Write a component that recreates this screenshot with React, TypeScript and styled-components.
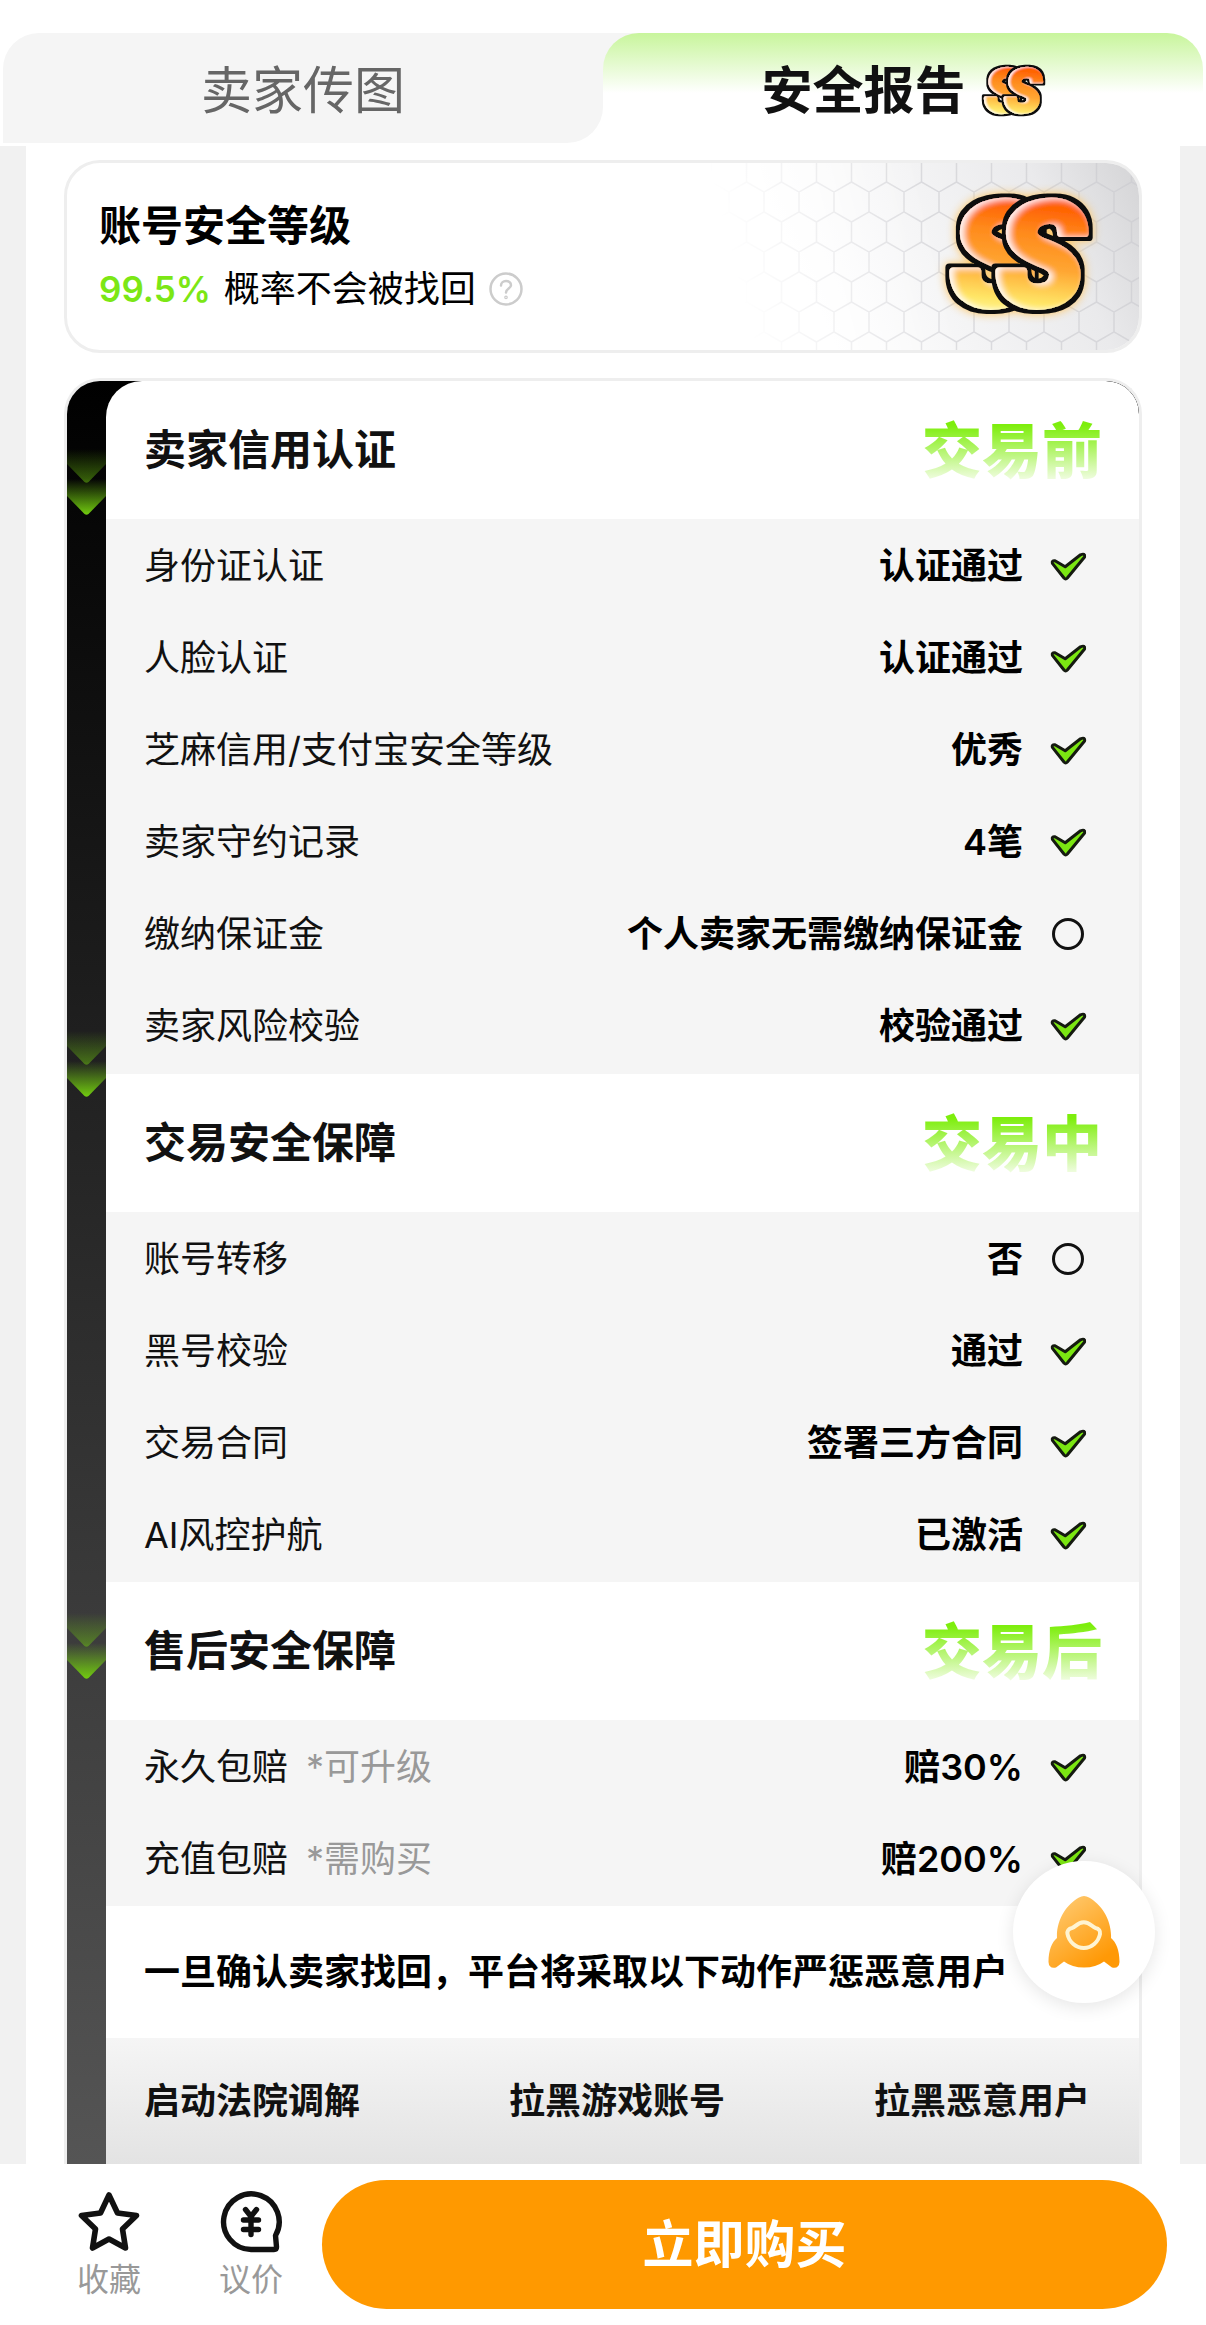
import React, { useId, useState } from "react";
import styled, { createGlobalStyle, css } from "styled-components";

const GlobalStyle = createGlobalStyle`
  *, *::before, *::after { box-sizing: border-box; }
  body {
    margin: 0;
    background: #fff;
    color: #111;
    font-family: Inter, "Noto Sans CJK SC", sans-serif;
    font-size: 36px;
    line-height: 48px;
  }
  h1, h2, p, dl, dd, ul { margin: 0; padding: 0; }
  ul { list-style: none; }
  button { font: inherit; color: inherit; border: 0; padding: 0; background: none; cursor: pointer; }
  svg { display: block; flex: none; }
`;

const Page = styled.div`
  min-height: 100vh;
  display: flex;
  flex-direction: column;
`;

const Tabs = styled.div`
  display: grid;
  grid-template-columns: 1fr 1fr;
  padding: 33px 3px 3px;
`;

const TabSlot = styled.div<{ $active: boolean }>`
  height: 110px;
  ${(p) => p.$active && css`background: linear-gradient(90deg, #f5f5f5 50%, #fff 50%);`}
`;

const Tab = styled.button<{ $active: boolean }>`
  width: 100%;
  height: 100%;
  display: flex;
  align-items: center;
  justify-content: center;
  gap: 16px;
  padding-top: 5px;
  font-size: 51px;
  line-height: 72px;
  ${(p) =>
    p.$active
      ? css`
          color: #111;
          font-weight: 700;
          border-radius: 36px 36px 0 0;
          background: linear-gradient(180deg, #c8f59c 0, #fff 60px);
        `
      : css`
          color: #666;
          font-weight: 400;
          border-radius: 36px 0 36px 0;
          background: #f5f5f5;
        `}
`;

const Main = styled.main`
  flex: 1;
  display: flex;
  flex-direction: column;
  gap: 25px;
  padding: 14px 38px 0;
  border: solid #f1f1f1;
  border-width: 0 26px;
`;

const LevelCard = styled.section`
  position: relative;
  display: flex;
  align-items: center;
  justify-content: space-between;
  height: 193px;
  padding: 0 32px;
  border: 3px solid #eee;
  border-radius: 36px;
  overflow: hidden;
`;

const Comb = styled.svg`
  position: absolute;
  top: 0;
  right: 0;
`;

const LevelText = styled.div`
  display: flex;
  flex-direction: column;
  gap: 9px;
  padding-bottom: 4px;
`;

const LevelTitle = styled.h1`
  font-size: 42px;
  line-height: 60px;
  font-weight: 700;
  color: #000;
`;

const LevelLine = styled.p`
  display: flex;
  align-items: center;
  gap: 13px;
  color: #000;
`;

const Percent = styled.strong`
  font-size: 35px;
  font-weight: 600;
  color: #7ce715;
`;

const LevelBadge = styled.div`
  position: relative;
  padding: 0 14px 4px 0;
`;

const HelpButton = styled.button`
  display: flex;
`;

const Report = styled.div`
  flex: 1;
  display: flex;
  border: 3px solid #eee;
  border-bottom: 0;
  border-radius: 36px 36px 0 0;
  overflow: hidden;
  background: linear-gradient(180deg, #000, #555);
`;

const Rail = styled.div`
  flex: none;
  width: 39px;
  display: flex;
  flex-direction: column;
  gap: 516px;
  padding-top: 68px;
`;

const Sections = styled.div`
  flex: 1;
  display: flex;
  flex-direction: column;
  border-radius: 36px 33px 0 0;
  overflow: hidden;
  background: #fff;
`;

const SectionHead = styled.header`
  display: flex;
  align-items: center;
  justify-content: space-between;
  height: 138px;
  padding: 0 37px 0 38px;
`;

const SectionTitle = styled.h2`
  font-size: 42px;
  line-height: 60px;
  font-weight: 700;
`;

const Stage = styled.span`
  padding-bottom: 6px;
  font-family: "Noto Sans CJK SC", sans-serif;
  font-size: 60px;
  line-height: 72px;
  font-weight: 900;
  color: transparent;
  background: linear-gradient(180deg, #7dee0c 14px, #a8f358 34px, #f3fde6 70px);
  background-clip: text;
  -webkit-background-clip: text;
`;

const Rows = styled.dl`
  padding: 1px 0;
  background: #f5f5f5;

  section:first-child > & {
    padding-bottom: 2px;
  }
`;

const Row = styled.div`
  display: flex;
  align-items: center;
  height: 92px;
  padding: 0 49px 0 38px;
`;

const Label = styled.dt`
  flex: 1;
`;

const Hint = styled.span`
  margin-left: 18px;
  color: #999;
`;

const Value = styled.dd`
  display: flex;
  align-items: center;
  gap: 27px;
  font-weight: 600;
  color: #000;
`;

const IconBox = styled.span`
  width: 40px;
  display: flex;
`;

const Notice = styled.p`
  display: flex;
  align-items: center;
  height: 132px;
  padding: 0 38px;
  font-weight: 600;
  color: #000;
`;

const Actions = styled.ul`
  flex: 1;
  display: flex;
  align-items: center;
  justify-content: space-between;
  min-height: 125px;
  padding: 0 49px 0 38px;
  font-weight: 600;
  background: linear-gradient(180deg, #f5f5f5, #e3e3e3);
`;

const BottomBar = styled.footer`
  position: sticky;
  bottom: 0;
  display: flex;
  align-items: center;
  height: 161px;
  padding: 0 39px 0 38px;
  background: #fff;
`;

const BarItem = styled.button`
  flex: none;
  width: 142px;
  display: flex;
  flex-direction: column;
  align-items: center;
  gap: 3px;
  padding-top: 5px;
  font-size: 32px;
  color: #999;
`;

const BuyButton = styled.button`
  flex: 1;
  height: 129px;
  border-radius: 65px;
  font-size: 51px;
  line-height: 72px;
  font-weight: 700;
  color: #fff;
  background: #f90;
`;

const FloatButton = styled.button`
  position: fixed;
  right: 51px;
  bottom: 322px;
  width: 142px;
  height: 142px;
  display: flex;
  align-items: center;
  justify-content: center;
  border-radius: 50%;
  background: #fff;
  box-shadow: 0 4px 18px rgba(0, 0, 0, 0.1);
`;

const Letters = styled.text`
  font-family: Roboto, sans-serif;
  font-size: 143px;
  font-weight: 900;
  font-style: italic;
  stroke-width: 8px;
  stroke-linejoin: round;
`;

const BadgeSvg = styled.svg<{ $glow?: boolean }>`
  overflow: visible;
  ${(p) => p.$glow && css`filter: drop-shadow(0 0 5px #ffc45c);`}
`;

function GradeBadge({ width, height, glow }: { width: number; height: number; glow?: boolean }) {
  const id = useId();
  return (
    <BadgeSvg $glow={glow} width={width} height={height} viewBox="0 0 148 122" role="img" aria-label="SS">
      <defs>
        <linearGradient id={`${id}g`} gradientUnits="userSpaceOnUse" x1="82" y1="4" x2="70" y2="118">
          <stop offset="0.08" stopColor="#ff6505" />
          <stop offset="0.3" stopColor="#ff8a1c" />
          <stop offset="0.6" stopColor="#ffa632" />
          <stop offset="0.9" stopColor="#ffe566" />
          <stop offset="1" stopColor="#fff38a" />
        </linearGradient>
        <filter id={`${id}o`} filterUnits="userSpaceOnUse" x="-20" y="-40" width="200" height="200">
          <feMorphology in="SourceAlpha" operator="dilate" radius="4" result="fat" />
          <feFlood floodColor="#111" />
          <feComposite in2="fat" operator="in" result="edge" />
          <feGaussianBlur in="SourceAlpha" stdDeviation="3" />
          <feOffset dx="4" dy="1" result="inner" />
          <feFlood floodColor="#fff" floodOpacity="0.9" />
          <feComposite in2="inner" operator="out" />
          <feComposite in2="SourceAlpha" operator="in" result="shine" />
          <feMerge>
            <feMergeNode in="edge" />
            <feMergeNode in="SourceGraphic" />
            <feMergeNode in="shine" />
          </feMerge>
        </filter>
      </defs>
      <g fill={`url(#${id}g)`} stroke={`url(#${id}g)`}>
        <Letters x="6" y="111" filter={`url(#${id}o)`}>S</Letters>
        <Letters x="52" y="111" filter={`url(#${id}o)`}>S</Letters>
      </g>
    </BadgeSvg>
  );
}

function Honeycomb() {
  return (
    <Comb width="430" height="187" viewBox="0 0 430 187" aria-hidden="true">
      <defs>
        <pattern id="comb-cells" width="35" height="60" x="20" y="29" patternUnits="userSpaceOnUse">
          <path d="M0 0V20L17.5 30V50L35 60M0 60L17.5 50M17.5 30L35 20V0" fill="none" stroke="#c9c9ce" strokeOpacity="0.6" strokeWidth="1.5" />
        </pattern>
        <linearGradient id="comb-shade" x1="0" y1="0.2" x2="1" y2="0">
          <stop offset="0.1" stopColor="#fff" />
          <stop offset="0.45" stopColor="#f4f4f5" />
          <stop offset="0.75" stopColor="#eaeaec" />
          <stop offset="1" stopColor="#d4d4d6" />
        </linearGradient>
        <linearGradient id="comb-fade" gradientUnits="userSpaceOnUse" x1="10" y1="50" x2="210" y2="0">
          <stop offset="0" stopColor="#000" />
          <stop offset="1" stopColor="#fff" />
        </linearGradient>
        <mask id="comb-mask">
          <rect width="430" height="187" fill="url(#comb-fade)" />
        </mask>
      </defs>
      <g mask="url(#comb-mask)">
        <rect width="430" height="187" fill="url(#comb-shade)" />
        <rect width="430" height="187" fill="url(#comb-cells)" />
      </g>
    </Comb>
  );
}

function HelpIcon() {
  return (
    <svg width="34" height="34" viewBox="0 0 34 34" fill="none" stroke="#ccc" strokeWidth="2.5" strokeLinecap="round" aria-hidden="true">
      <circle cx="17" cy="17" r="15.5" />
      <path d="M12 13.5C12 7.5 22 7.5 22 13.2C22 16.5 17 16.5 17 20.5" />
      <circle cx="17" cy="25.3" r="0.6" />
    </svg>
  );
}

function RailArrow() {
  const id = useId();
  return (
    <svg width="39" height="66" viewBox="0 0 39 66" aria-hidden="true">
      <defs>
        <linearGradient id={`${id}a`} x1="0" y1="0" x2="0" y2="1">
          <stop offset="0" stopColor="#6fc70f" stopOpacity="0" />
          <stop offset="1" stopColor="#6fc70f" stopOpacity="0.5" />
        </linearGradient>
        <linearGradient id={`${id}b`} x1="0" y1="0" x2="0" y2="1">
          <stop offset="0" stopColor="#6fc70f" stopOpacity="0" />
          <stop offset="1" stopColor="#72cc0f" />
        </linearGradient>
      </defs>
      <path d="M0 0H39V15L21.5 33Q19.5 34.5 17.5 33L0 15Z" fill={`url(#${id}a)`} />
      <path d="M0 30H39V47L21.5 65Q19.5 66.5 17.5 65L0 47Z" fill={`url(#${id}b)`} />
    </svg>
  );
}

function CheckIcon() {
  return (
    <svg width="37" height="29" viewBox="0 0 37 29" role="img" aria-label="已通过">
      <path
        d="M2.4 11.4Q1.5 8.4 5 8.8L15.2 14.8L30.500 2.8Q35.300 0.800 34.600 5L17.300 26Q15.600 27.800 14 26Z"
        fill="#7be612"
        stroke="#151a10"
        strokeWidth="3"
        strokeLinejoin="round"
      />
    </svg>
  );
}

function CircleIcon() {
  return (
    <svg width="36" height="36" viewBox="0 0 36 36" fill="none" stroke="#111" strokeWidth="3" role="img" aria-label="无需">
      <circle cx="18" cy="18" r="14.5" />
    </svg>
  );
}

function StarIcon() {
  return (
    <svg width="62" height="62" viewBox="0 0 62 62" fill="none" stroke="#111" strokeWidth="5.6" strokeLinejoin="round" aria-hidden="true">
      <path d="M31 4L39.5 22L58.5 24.5L44.5 38L47.5 57L31 48L14.5 57L17.5 38L3.5 24.5L22.5 22Z" />
    </svg>
  );
}

function BargainIcon() {
  return (
    <svg width="62" height="62" viewBox="0 0 62 62" fill="none" stroke="#111" strokeWidth="5.4" strokeLinecap="round" strokeLinejoin="round" aria-hidden="true">
      <path d="M31 58.5A27.8 27.8 0 1 1 55.5 44.5L56.5 56Q56.5 58.5 54 58.5Z" />
      <path d="M25.5 18.5L31 25.5L36.5 18.5M31 25.5V43.5M23.5 29H38.5M23.5 38.5H38.5" />
    </svg>
  );
}

function RocketIcon() {
  return (
    <svg width="72" height="72" viewBox="0 0 72 72" aria-hidden="true">
      <defs>
        <linearGradient id="rocket-body" x1="0.1" y1="0" x2="0.8" y2="1">
          <stop offset="0.1" stopColor="#ffc76a" />
          <stop offset="0.9" stopColor="#ff9906" />
        </linearGradient>
      </defs>
      <path
        d="M31 1.5Q36 -1.5 41 1.5C53 8 64 24 63 42C68 46 71.5 54 71.5 66Q71 73 64 71.5L56 65.5Q48 71.5 36 71.5Q24 71.5 16 65.5L8 71.5Q1 73 0.5 66C0.5 54 4 46 9 42C8 24 19 8 31 1.5Z"
        fill="url(#rocket-body)"
      />
      <path
        d="M24 32C28 31 29 26.3 35.8 26.3C42.5 26.3 43.5 31 47.5 32C51 32.5 52.5 35 52 38C50.5 46 43.5 52 35.8 52C28 52 21 46 19.5 38C19 35 20.5 32.5 24 32Z"
        fill="none"
        stroke="#fff4d2"
        strokeWidth="4"
      />
    </svg>
  );
}

type Item = { label: string; value: string; ok?: boolean; hint?: string };

const sections: { title: string; stage: string; items: Item[] }[] = [
  {
    title: "卖家信用认证",
    stage: "交易前",
    items: [
      { label: "身份证认证", value: "认证通过", ok: true },
      { label: "人脸认证", value: "认证通过", ok: true },
      { label: "芝麻信用/支付宝安全等级", value: "优秀", ok: true },
      { label: "卖家守约记录", value: "4笔", ok: true },
      { label: "缴纳保证金", value: "个人卖家无需缴纳保证金" },
      { label: "卖家风险校验", value: "校验通过", ok: true },
    ],
  },
  {
    title: "交易安全保障",
    stage: "交易中",
    items: [
      { label: "账号转移", value: "否" },
      { label: "黑号校验", value: "通过", ok: true },
      { label: "交易合同", value: "签署三方合同", ok: true },
      { label: "AI风控护航", value: "已激活", ok: true },
    ],
  },
  {
    title: "售后安全保障",
    stage: "交易后",
    items: [
      { label: "永久包赔", hint: "*可升级", value: "赔30%", ok: true },
      { label: "充值包赔", hint: "*需购买", value: "赔200%", ok: true },
    ],
  },
];

const actions = ["启动法院调解", "拉黑游戏账号", "拉黑恶意用户"];

export default function App() {
  const [saved, setSaved] = useState(false);
  return (
    <Page>
      <GlobalStyle />
      <Tabs role="tablist">
        <TabSlot $active={false}>
          <Tab $active={false} role="tab" aria-selected={false}>卖家传图</Tab>
        </TabSlot>
        <TabSlot $active>
          <Tab $active role="tab" aria-selected>
            安全报告
            <GradeBadge width={63} height={52} />
          </Tab>
        </TabSlot>
      </Tabs>

      <Main>
        <LevelCard>
          <Honeycomb />
          <LevelText>
            <LevelTitle>账号安全等级</LevelTitle>
            <LevelLine>
              <Percent>99.5%</Percent>
              概率不会被找回
              <HelpButton aria-label="说明"><HelpIcon /></HelpButton>
            </LevelLine>
          </LevelText>
          <LevelBadge>
            <GradeBadge width={148} height={122} glow />
          </LevelBadge>
        </LevelCard>

        <Report>
          <Rail>
            {sections.map((s) => <RailArrow key={s.title} />)}
          </Rail>
          <Sections>
            {sections.map((s) => (
              <section key={s.title}>
                <SectionHead>
                  <SectionTitle>{s.title}</SectionTitle>
                  <Stage>{s.stage}</Stage>
                </SectionHead>
                <Rows>
                  {s.items.map((it) => (
                    <Row key={it.label}>
                      <Label>
                        {it.label}
                        {it.hint && <Hint>{it.hint}</Hint>}
                      </Label>
                      <Value>
                        {it.value}
                        <IconBox>{it.ok ? <CheckIcon /> : <CircleIcon />}</IconBox>
                      </Value>
                    </Row>
                  ))}
                </Rows>
              </section>
            ))}
            <Notice>一旦确认卖家找回，平台将采取以下动作严惩恶意用户</Notice>
            <Actions>
              {actions.map((a) => <li key={a}>{a}</li>)}
            </Actions>
          </Sections>
        </Report>
      </Main>

      <FloatButton aria-label="返回顶部" onClick={() => window.scrollTo({ top: 0 })}>
        <RocketIcon />
      </FloatButton>

      <BottomBar>
        <BarItem aria-pressed={saved} onClick={() => setSaved(!saved)}>
          <StarIcon />
          收藏
        </BarItem>
        <BarItem>
          <BargainIcon />
          议价
        </BarItem>
        <BuyButton>立即购买</BuyButton>
      </BottomBar>
    </Page>
  );
}
